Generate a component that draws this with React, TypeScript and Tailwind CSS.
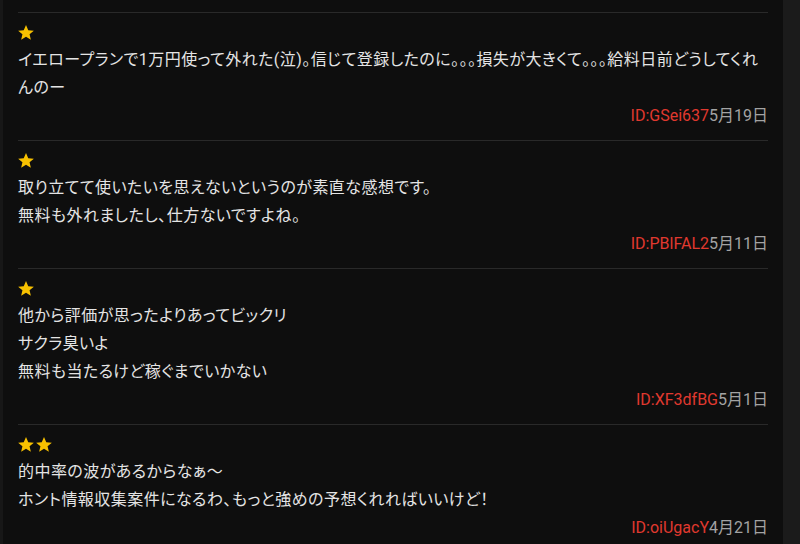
import React from "react";

type Review = {
    stars: number;
    lines: string[];
    id: string;
    date: string;
};

const REVIEWS: Review[] = [
    {
        stars: 1,
        lines: ["イエロープランで1万円使って外れた(泣)。信じて登録したのに。。。損失が大きくて。。。給料日前どうしてくれ", "んのー"],
        id: "ID:GSei637",
        date: "5月19日",
    },
    {
        stars: 1,
        lines: ["取り立てて使いたいを思えないというのが素直な感想です。", "無料も外れましたし、仕方ないですよね。"],
        id: "ID:PBlFAL2",
        date: "5月11日",
    },
    {
        stars: 1,
        lines: ["他から評価が思ったよりあってビックリ", "サクラ臭いよ", "無料も当たるけど稼ぐまでいかない"],
        id: "ID:XF3dfBG",
        date: "5月1日",
    },
    {
        stars: 2,
        lines: ["的中率の波があるからなぁ～", "ホント情報収集案件になるわ、もっと強めの予想くれればいいけど！"],
        id: "ID:oiUgacY",
        date: "4月21日",
    },
];

function Star() {
    return (
        <svg width="16" height="15" viewBox="1 1.5 22 20.5" className="shrink-0">
            <path
                d="M12 1.5l3.1 7.1 7.7.6-5.9 5 1.8 7.5L12 17.7l-6.7 4 1.8-7.5-5.9-5 7.7-.6z"
                fill="#f7c100"
            />
        </svg>
    );
}

function ReviewItem({ review }: { review: Review }) {
    return (
        <div className="border-t border-[#292929] pt-[9px] pb-[10px]">
            <div className="flex h-[20px] items-center gap-[2px]">
                {Array.from({ length: review.stars }).map((_, i) => (
                    <Star key={i} />
                ))}
            </div>
            <div className="mt-[4px] text-[16px] leading-[28px] tracking-[0.45px] whitespace-nowrap text-[#e4e4e4] [font-feature-settings:'palt']">
                {review.lines.map((line, i) => (
                    <p key={i}>{line}</p>
                ))}
            </div>
            <div className="flex h-[28px] items-center justify-end text-[16px]">
                <span className="text-[#e0392f]">{review.id}</span>
                <span className="text-[#a3a3a3]">{review.date}</span>
            </div>
        </div>
    );
}

export default function App() {
    return (
        <div
            className="flex h-[544px] w-[800px] overflow-hidden bg-[#0e0e0e]"
            style={{ fontFamily: 'Roboto, "Noto Sans CJK JP", sans-serif' }}
        >
            <div className="w-[3px] shrink-0 bg-[#171717]" />
            <div className="min-w-0 flex-1 overflow-hidden px-[15px] pt-[12px]">
                {REVIEWS.map((r, i) => (
                    <ReviewItem key={i} review={r} />
                ))}
            </div>
            <div className="w-[17px] shrink-0 bg-[#1b1b1b]" />
        </div>
    );
}
